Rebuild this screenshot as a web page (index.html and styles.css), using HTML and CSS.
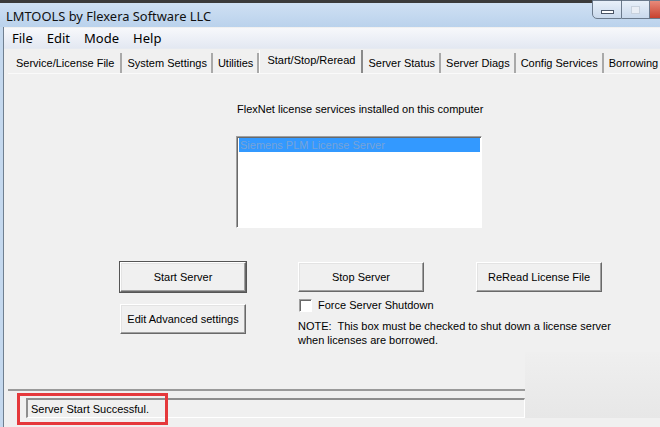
FILE: index.html
```html
<!DOCTYPE html>
<html lang="en">
<head>
    <meta charset="UTF-8">
    <title>LMTOOLS by Flexera Software LLC</title>
    <link rel="stylesheet" href="styles.css">
</head>
<body>
    <div class="window">
        <div class="titlebar">
            <span class="title">LMTOOLS by Flexera Software LLC</span>
            <div class="controls">
                <span class="ctl min"><i></i></span>
                <span class="ctl max"><i></i></span>
                <span class="ctl close"></span>
            </div>
        </div>
        <div class="frame">
            <div class="client">
                <div class="menubar">
                    <span>File</span>
                    <span>Edit</span>
                    <span>Mode</span>
                    <span>Help</span>
                </div>
                <div class="tabs">
                    <span class="tab first">Service/License File</span>
                    <span class="tab">System Settings</span>
                    <span class="tab">Utilities</span>
                    <span class="tab active">Start/Stop/Reread</span>
                    <span class="tab">Server Status</span>
                    <span class="tab">Server Diags</span>
                    <span class="tab">Config Services</span>
                    <span class="tab">Borrowing</span>
                </div>
                <div class="panel">
                    <div class="caption">FlexNet license services installed on this computer</div>
                    <div class="listbox">
                        <div class="item selected">Siemens PLM License Server</div>
                    </div>
                    <div class="actions">
                        <button class="btn default">Start Server</button>
                        <button class="btn">Stop Server</button>
                        <button class="btn">ReRead License File</button>
                        <button class="btn edit">Edit Advanced settings</button>
                        <div class="force">
                            <label class="check"><span class="box"></span>Force Server Shutdown</label>
                            <p class="note">NOTE:&nbsp; This box must be checked to shut down a license server<br>when licenses are borrowed.</p>
                        </div>
                    </div>
                </div>
                <div class="statusbar">
                    <div class="status">Server Start Successful.</div>
                </div>
            </div>
        </div>
    </div>
    <div class="haze"></div>
    <div class="highlight"></div>
</body>
</html>
```

FILE: styles.css
```css
* {
    margin: 0;
    padding: 0;
    box-sizing: border-box;
}

body {
    width: 660px;
    height: 427px;
    overflow: hidden;
    position: relative;
    background-color: #f0f0f0;
    font-family: "Liberation Sans", Arial, sans-serif;
    font-size: 11px;
    color: #000;
}

.window {
    display: flex;
    flex-direction: column;
    height: 427px;
}

/* title bar */
.titlebar {
    height: 28px;
    border-top: 3px solid #3b3b3b;
    background: linear-gradient(#cfe0f3, #bad2ec);
    display: flex;
    align-items: center;
    padding-left: 6px;
}

.title {
    font-family: "Noto Sans", "Open Sans", sans-serif;
    font-size: 12.9px;
    color: #111;
    margin-top: 2px;
}

.controls {
    margin-left: auto;
    align-self: flex-start;
    margin-top: -3px;
    display: flex;
}

.ctl {
    height: 19px;
    border: 1px solid #6b7a8c;
    border-left: none;
    display: flex;
    align-items: center;
    justify-content: center;
}

.min {
    width: 30px;
    border-left: 1px solid #6b7a8c;
    border-bottom-left-radius: 5px;
    background: linear-gradient(#e8f0f9, #c9d9ec);
}

.min i {
    width: 13px;
    height: 4px;
    background: #fff;
    border: 1px solid #4a5566;
    margin-top: 4px;
}

.max {
    width: 28px;
    background: linear-gradient(#e8f0f9, #c9d9ec);
}

.max i {
    width: 9px;
    height: 8px;
    border: 1px solid #c8d2de;
    background: #e9eef5;
}

.close {
    width: 10px;
    border-right: none;
    background: linear-gradient(#e88a7a, #c8412f);
}

/* window frame */
.frame {
    flex: 1;
    display: flex;
    border-left: 3px solid #c4d8ee;
}

.client {
    flex: 1;
    display: flex;
    flex-direction: column;
    border-left: 1px solid #6f7f90;
}

.menubar {
    height: 21px;
    display: flex;
    align-items: center;
    gap: 14px;
    padding-left: 8px;
    margin-top: 1px;
    background: linear-gradient(#f7f8fb, #e3e8f2);
    border-bottom: 1px solid #e6eaf1;
    font-family: "Noto Sans", "Open Sans", sans-serif;
    font-size: 13px;
}

/* tabs */
.tabs {
    display: flex;
    align-items: flex-end;
    height: 23px;
    margin-top: 1px;
    padding-left: 7px;
    white-space: nowrap;
}

.tab {
    height: 20px;
    padding: 0 4px;
    display: flex;
    align-items: center;
    border-right: 2px solid #a9a9a9;
    margin-right: 1px;
}

.tab.first {
    padding: 0 6px 0 5px;
}

.tab.active {
    height: 23px;
    padding: 0 6px 3px 7px;
    background: #f0f0f0;
    border-left: 1px solid #fff;
    border-right: 2px solid #8a8a8a;
    margin-left: -1px;
}

/* page */
.panel {
    height: 318px;
    margin-left: 4px;
    border-top: 1px solid #fafafa;
    border-bottom: 2px solid #9a9a9a;
    padding-top: 28px;
    padding-left: 228px;
    display: flex;
    flex-direction: column;
}

.caption {
    line-height: 14px;
    margin-left: 1px;
}

.listbox {
    width: 246px;
    height: 92px;
    margin-top: 20px;
    background: #fff;
    border: 1px solid;
    border-color: #a0a0a0 #fff #fff #a0a0a0;
    box-shadow: inset 1px 1px #696969;
    padding: 1px 1px 0 2px;
}

.item {
    height: 14px;
    line-height: 14px;
    padding-left: 1px;
    font-size: 11px;
}

.item.selected {
    background: #3399ff;
    color: #77a3d8;
}

.actions {
    margin-left: -116px;
    margin-top: 34px;
    display: grid;
    grid-template-columns: 126px 126px 126px;
    column-gap: 52px;
    row-gap: 6px;
    align-items: start;
}

.btn {
    height: 30px;
    font-family: "Liberation Sans", Arial, sans-serif;
    font-size: 11px;
    background: #f0f0f0;
    border: 1px solid;
    border-color: #fff #696969 #696969 #fff;
    box-shadow: inset -1px -1px #a0a0a0, inset 1px 1px #e3e3e3;
}

.btn.default {
    outline: 1px solid #555;
}

.edit {
    margin-top: 6px;
}

.force {
    grid-column: 2 / span 2;
    white-space: nowrap;
}

.check {
    display: flex;
    align-items: center;
    gap: 6px;
    margin-left: 1px;
    line-height: 14px;
}

.box {
    width: 13px;
    height: 13px;
    background: #fff;
    border: 1px solid;
    border-color: #a0a0a0 #fff #fff #a0a0a0;
    box-shadow: inset 1px 1px #696969;
}

.note {
    margin-top: 7px;
    line-height: 14px;
}

/* status */
.statusbar {
    display: flex;
    padding-top: 7px;
    padding-left: 22px;
    height: 36px;
}

.status {
    width: 499px;
    height: 20px;
    line-height: 18px;
    padding-left: 3px;
    background: #f0f0f0;
    border-top: 2px solid #8e8e8e;
    border-left: 2px solid #8e8e8e;
    border-bottom: 1px solid #fff;
    border-right: 1px solid #fff;
}

/* soft watermark patch in the lower right corner of the capture */
.haze {
    position: absolute;
    left: 525px;
    top: 352px;
    width: 135px;
    height: 66px;
    background: linear-gradient(#efefef, #e7e7e7);
}

.highlight {
    position: absolute;
    left: 17px;
    top: 393px;
    width: 151px;
    height: 32px;
    border: 3px solid #e5383b;
}
```
